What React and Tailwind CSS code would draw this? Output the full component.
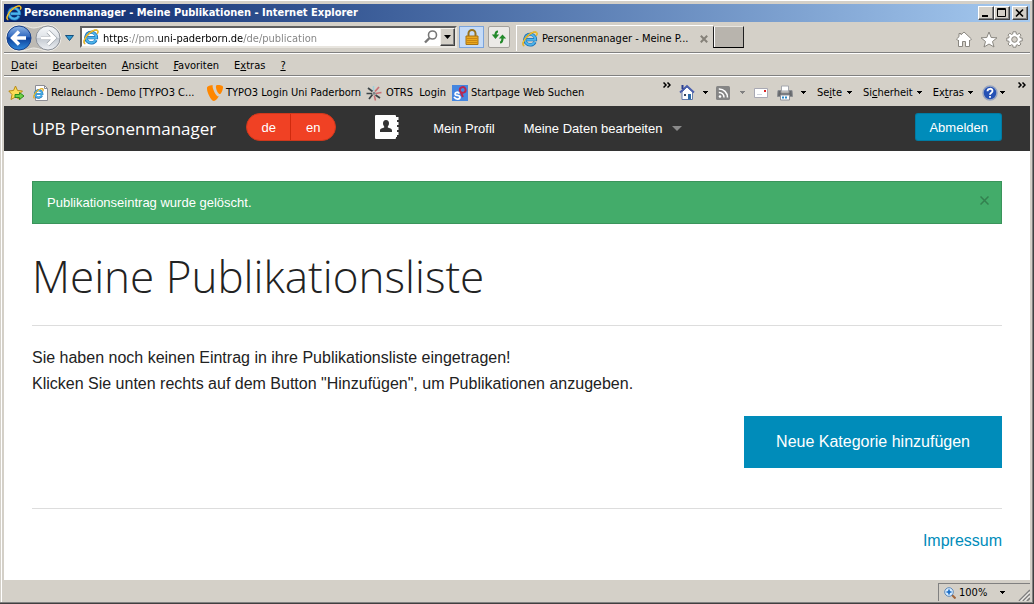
import React from "react";

function IeLogo({ className }) {
  return (
    <svg viewBox="0 0 18 18" className={className} aria-hidden="true">
      <path d="M14.6 12.3A6 6 0 1 1 15.2 9.8H5.4" fill="none" stroke="#1a6fb5" strokeWidth="3.6" />
      <path d="M14.4 12.2A5.8 5.8 0 1 1 15 9.8H5.4" fill="none" stroke="#4db4ea" strokeWidth="2.2" />
      <path d="M2.5 16.6C-.6 15.6 2 9.4 6.6 5.2C10.8 1.4 15.8-.2 16.6 2.2C16.9 3.2 16.5 4.4 16 5.2" fill="none" stroke="#c98f10" strokeWidth="1.7" />
      <path d="M2.5 16.6C-.6 15.6 2 9.4 6.6 5.2C10.8 1.4 15.8-.2 16.6 2.2C16.9 3.2 16.5 4.4 16 5.2" fill="none" stroke="#fbd541" strokeWidth="1.1" />
    </svg>
  );
}

function Caret({ className = "text-black" }) {
  return (
    <svg viewBox="0 0 5 3" className={"h-[3px] w-[5px] shrink-0 " + className} shapeRendering="crispEdges" aria-hidden="true">
      <path d="M0 0H5L2.5 3Z" fill="currentColor" />
    </svg>
  );
}

function Chevrons() {
  return (
    <svg viewBox="0 0 8 6" className="h-[6px] w-2" aria-hidden="true">
      <path d="M.5.5L3 3L.5 5.5M4.5.5L7 3L4.5 5.5" fill="none" stroke="#000" strokeWidth="1.5" />
    </svg>
  );
}

function WindowButton({ label, children }) {
  return (
    <button aria-label={label} className="flex h-[14px] w-4 items-center justify-center border border-t-white border-l-white border-r-[#404040] border-b-[#404040] bg-[#d4d0c8] shadow-[inset_-1px_-1px_0_#808080]">
      <svg viewBox="0 0 12 10" className="h-[10px] w-3" aria-hidden="true">{children}</svg>
    </button>
  );
}

function TitleBar() {
  return (
    <header className="flex h-[18px] items-center justify-between bg-linear-to-r from-[#0a246a] to-[#a6caf0] px-0.5">
      <div className="flex items-center gap-0.5">
        <IeLogo className="size-4" />
        <span className="text-[11px] font-bold whitespace-nowrap text-white">Personenmanager - Meine Publikationen - Internet Explorer</span>
      </div>
      <div className="flex">
        <WindowButton label="Minimieren"><path d="M2 7H8V9H2Z" fill="#000" /></WindowButton>
        <WindowButton label="Maximieren"><path d="M1.500.5H9.500V8.500H1.500ZM1.500 1.500H9.500" fill="none" stroke="#000" /></WindowButton>
        <span className="w-0.5" />
        <WindowButton label="Schließen"><path d="M2 1.5L9 8.5M9 1.5L2 8.5" fill="none" stroke="#000" strokeWidth="1.6" /></WindowButton>
      </div>
    </header>
  );
}

function HistoryButtons() {
  return (
    <svg viewBox="0 0 58 28" className="h-7 w-[58px]" role="img" aria-label="Zurück und Vorwärts">
      <defs>
        <linearGradient id="back" x1="0" y1="0" x2="0" y2="1">
          <stop offset="0" stopColor="#8fb4e4" />
          <stop offset=".45" stopColor="#2f68c0" />
          <stop offset=".5" stopColor="#0d3f98" />
          <stop offset="1" stopColor="#2f8be0" />
        </linearGradient>
        <linearGradient id="fwd" x1="0" y1="0" x2="0" y2="1">
          <stop offset="0" stopColor="#f5f7f9" />
          <stop offset=".48" stopColor="#dfe3e8" />
          <stop offset=".52" stopColor="#c3c9d1" />
          <stop offset="1" stopColor="#eef1f4" />
        </linearGradient>
      </defs>
      <path d="M14 1C22 1 24 4 29 4C34 4 37 1 43 1A13 13 0 0 1 43 27C37 27 34 24 29 24C24 24 22 27 14 27A13 13 0 0 1 14 1Z" fill="#bdbab4" stroke="#efede8" strokeWidth="1" />
      <circle cx="14" cy="14" r="12" fill="url(#back)" stroke="#17408b" />
      <circle cx="43" cy="14" r="12" fill="url(#fwd)" stroke="#8d929a" />
      <path d="M14 7.5L7.5 14L14 20.5M8.5 14H21" fill="none" stroke="#fff" strokeWidth="3.4" />
      <path d="M43 7.5L49.5 14L43 20.5M48.5 14H36" fill="none" stroke="#9aa0a8" strokeWidth="4.2" />
      <path d="M43 7.5L49.5 14L43 20.5M48.5 14H36" fill="none" stroke="#fff" strokeWidth="3" />
    </svg>
  );
}

function AddressRow() {
  return (
    <div className="flex h-[31px] justify-between border-b border-[#808080] pr-[7px] pl-px">
      <div className="flex items-start pt-0.5">
        <button aria-label="Verlauf"><HistoryButtons /></button>
        <button aria-label="Letzte Seiten" className="mr-1.5 ml-0.5 pt-[11px]">
          <svg viewBox="0 0 9 6" className="h-1.5 w-[9px]" aria-hidden="true"><path d="M.5.5H8.5L4.5 5.5Z" fill="#2f9bd6" stroke="#14507e" /></svg>
        </button>
        <div className="mt-0.5 flex h-[22px] w-[377px] items-center border-2 border-t-[#606060] border-r-[#e8e5df] border-b-[#e8e5df] border-l-[#606060] bg-white pl-px">
          <IeLogo className="size-4 shrink-0" />
          <input
            type="text"
            aria-label="Adresse"
            defaultValue="https://pm.uni-paderborn.de/de/publication"
            className="ml-1 h-[18px] min-w-0 flex-1 bg-[linear-gradient(90deg,#000_26px,#808080_26px_54px,#000_54px_140px,#808080_140px)] bg-clip-text pt-0.5 text-[11px] text-transparent outline-none"
          />
          <button aria-label="Suchen" className="mr-0.5">
            <svg viewBox="0 0 14 14" className="size-[14px]" aria-hidden="true"><circle cx="8.5" cy="5" r="4" fill="none" stroke="#777" strokeWidth="1.6" /><path d="M5.5 8L1 12.5" stroke="#777" strokeWidth="2.4" /></svg>
          </button>
          <button aria-label="Adressliste" className="flex h-[18px] w-[15px] items-center justify-center border border-t-[#f4f2ee] border-r-[#404040] border-b-[#404040] border-l-[#f4f2ee] bg-[#d4d0c8] shadow-[inset_-1px_-1px_0_#808080]">
            <svg viewBox="0 0 7 4" className="h-1 w-[7px]" aria-hidden="true"><path d="M0 0H7L3.5 4Z" /></svg>
          </button>
        </div>
        <button aria-label="Sicherheitsbericht" className="mt-0.5 ml-0.5 flex h-[22px] w-[25px] items-center justify-center border border-[#7ba4dc] bg-[#c5dbf7]">
          <svg viewBox="0 0 14 16" className="h-4 w-[14px]" aria-hidden="true">
            <path d="M3.5 8V4.5A3.5 3.5 0 0 1 10.5 4.5V8" fill="none" stroke="#98731d" strokeWidth="2" />
            <path d="M1 7H13V15.5H1Z" fill="#eaa91f" stroke="#a87313" />
            <path d="M1.5 9.5H12.5M1.5 11.5H12.5M1.5 13.5H12.5" stroke="#c98612" />
          </svg>
        </button>
        <button aria-label="Aktualisieren" className="mt-0.5 ml-1 flex h-[22px] w-[22px] items-center justify-center rounded-xs border border-[#a3a09b] bg-[#eceae7]">
          <svg viewBox="0 0 16 14" className="h-[14px] w-4" aria-hidden="true">
            <path d="M7 1.5Q4.5 1.5 4.5 5M9 12.5Q11.500 12.5 11.5 8" fill="none" stroke="#238a2b" strokeWidth="2.2" />
            <path d="M.8 4.600H8.2L4.5 9ZM7.800 8.6H15.2L11.500 4.4Z" fill="#238a2b" />
          </svg>
        </button>
        <div className="mt-px ml-1.5 flex h-[26px] w-[197px] items-center border-t border-l border-white pl-[5px] text-[11px]">
          <IeLogo className="size-4 shrink-0" />
          <span className="ml-1 w-[150px] whitespace-nowrap">Personenmanager - Meine P...</span>
          <button aria-label="Tab schließen" className="ml-2">
            <svg viewBox="0 0 8 8" className="size-2" aria-hidden="true"><path d="M.8.8L7.2 7.2M7.2.8L.8 7.2" stroke="#858179" strokeWidth="2" /></svg>
          </button>
        </div>
        <button aria-label="Neuer Tab" className="mt-0.5 h-[22px] w-[31px] border border-t-[#e8e5df] border-r-[#202020] border-b-black border-l-[#202020] bg-[#b8b4ad] shadow-[inset_1px_0_0_#fff]" />
      </div>
      <div className="flex items-center gap-2 pt-1">
        <button aria-label="Startseite">
          <svg viewBox="0 0 16 16" className="size-4" aria-hidden="true"><path d="M8 1L15.5 8L14 9.5L13.5 9V15.5H9.5V10.5H6.5V15.5H2.5V9L2 9.5L.5 8L3 5.700V2.5H5V3.8Z" fill="#fff" stroke="#8a8780" /></svg>
        </button>
        <button aria-label="Favoriten anzeigen">
          <svg viewBox="0 0 18 17" className="h-[17px] w-[18px]" aria-hidden="true"><path d="M9 1L11.2 6.5L17 6.8L12.5 10.5L14 16L9 13L4 16L5.5 10.5L1 6.8L6.8 6.5Z" fill="#fff" stroke="#8a8780" /></svg>
        </button>
        <button aria-label="Einstellungen">
          <svg viewBox="0 0 17 17" className="size-[17px]" aria-hidden="true">
            <path d="M7 .8H10L10.300 3L11.600 3.500L13.300 2.200L15 4.100L13.800 5.700L14.300 7H16.200V10H14.300L13.700 11.300L15 13L13 14.900L11.400 13.700L10.200 14.200L10 16.200H7L6.800 14.200L5.500 13.700L3.900 14.900L2 13L3.200 11.300L2.700 10H.8V7H2.700L3.200 5.700L2 4.100L3.900 2.200L5.500 3.500L6.700 3Z" fill="#fff" stroke="#8a8780" />
            <circle cx="8.5" cy="8.5" r="2.800" fill="#d4d0c8" stroke="#8a8780" />
          </svg>
        </button>
      </div>
    </div>
  );
}

function MenuBar() {
  return (
    <nav className="flex h-[23px] items-center gap-[15px] border-t border-t-white border-b border-b-[#808080] pt-0.5 pl-[7px] text-[11px]" aria-label="Menü">
      <button><u>D</u>atei</button>
      <button><u>B</u>earbeiten</button>
      <button><u>A</u>nsicht</button>
      <button><u>F</u>avoriten</button>
      <button>E<u>x</u>tras</button>
      <button><u>?</u></button>
    </nav>
  );
}

function FavoritesBar() {
  return (
    <div className="flex h-[30px] justify-between border-t border-white pt-0.5 pr-1 pl-1 text-[11px] whitespace-nowrap">
      <div className="flex items-center gap-2">
        <button aria-label="Zu Favoriten hinzufügen">
          <svg viewBox="0 0 17 16" className="h-4 w-[17px]" aria-hidden="true">
            <path d="M7.5 1L9.5 5.5L14.5 6L11 9.5L12 14.5L7.5 12L3 14.5L4 9.5L.8 6L5.5 5.5Z" fill="#fbdc55" stroke="#b98a16" />
            <path d="M7 9.5H11.5V7.5L16 11L11.5 14.5V12.5H7Z" fill="#6fd046" stroke="#2d8a1c" />
          </svg>
        </button>
        <a href="#relaunch" className="flex w-[166px] items-center gap-0.5">
          <span className="relative size-4 shrink-0">
            <svg viewBox="0 0 16 16" className="size-4" aria-hidden="true"><path d="M2.5.5H11.5L14.5 3.5V15.5H2.5Z" fill="#fff" stroke="#8c8c94" /><path d="M11.5.5V3.5H14.5" fill="none" stroke="#8c8c94" /></svg>
            <IeLogo className="absolute top-[3px] left-0 size-[11px]" />
          </span>
          Relaunch - Demo [TYPO3 C...
        </a>
        <a href="#typo3" className="flex w-[151px] items-center gap-[3px]">
          <svg viewBox="0 0 16 16" className="size-4 shrink-0" aria-hidden="true">
            <path d="M11.8 11.3C11.5 11.4 11.3 11.4 11 11.4C8.8 11.4 5.6 3.8 5.6 1.3C5.6.4 5.8.1 6.1 0C3.5.3.3 1.2 0 2.4C0 2.7 0 3.2 0 3.7C0 7.6 4.2 16 7 16C8.4 16 10.6 13.9 11.8 11.3ZM10.5 0C13.2 0 16 .4 16 2C16 5.2 13.9 9.1 12.9 9.1C11.1 9.1 8.9 4.2 8.9 1.7C8.9.6 9.4 0 10.5 0Z" fill="#ff8700" />
          </svg>
          TYPO3 Login Uni Paderborn
        </a>
        <a href="#otrs" className="flex w-[78px] items-center gap-1">
          <svg viewBox="0 0 16 16" className="size-4 shrink-0" aria-hidden="true">
            <path d="M7.500 6V1" stroke="#9fd0dc" strokeWidth="1.5" />
            <path d="M9 6.500L13 2M9.500 8.500L15.500 7.500" stroke="#c96f74" strokeWidth="1.7" />
            <path d="M6.500 6.500L2 3M6 8.500H.5M6.500 9.500L3 14" stroke="#3b4346" strokeWidth="1.7" />
            <path d="M9.500 10L14 13" stroke="#3b4346" strokeWidth="1.7" />
            <path d="M8.300 10.500L9.500 15.500" stroke="#c96f74" strokeWidth="1.5" />
            <circle cx="8" cy="8.300" r="1.500" fill="#7c8589" />
          </svg>
          OTRS&nbsp; Login
        </a>
        <a href="#startpage" className="flex items-center gap-[3px]">
          <svg viewBox="0 0 16 16" className="size-4 shrink-0" aria-hidden="true">
            <path d="M0 0H16V16H0Z" fill="#4586e0" />
            <path d="M7.5 8.5C5.500 6 2 8 3.500 9.800C4.500 11 7.500 9.500 8 12C8 14.600 4 14.800 2 12" fill="none" stroke="#fff" strokeWidth="1.800" />
            <path d="M11 12L8 6C6.800 2.600 11.500.5 13.300 3.500C14.800 7 11 8.800 9 7" fill="none" stroke="#b8274f" strokeWidth="1.900" />
          </svg>
          Startpage Web Suchen
        </a>
      </div>
      <div className="flex items-center">
        <button aria-label="Weitere Favoriten" className="mr-2 self-start pt-[3px]"><Chevrons /></button>
        <button aria-label="Startseite" className="flex items-center gap-2">
          <svg viewBox="0 0 16 17" className="h-[17px] w-4" aria-hidden="true">
            <path d="M3 8V15.5H13.5V8L8 3Z" fill="#fff" stroke="#667cab" />
            <path d="M1 8.5L8 2L15 8.5" fill="none" stroke="#4a5fae" strokeWidth="1.800" />
            <path d="M2.5 1H4.5V5H2.5Z" fill="#2b3f90" />
            <path d="M9 10H12V15.5H9Z" fill="#2c6ca8" /><path d="M5 10H7V12H5Z" fill="#36445c" />
          </svg>
          <Caret />
        </button>
        <button aria-label="Feeds" className="ml-2 flex items-center gap-[10px]">
          <svg viewBox="0 0 14 14" className="size-[14px]" aria-hidden="true">
            <rect width="14" height="14" rx="1.500" fill="#858585" />
            <circle cx="4" cy="10.5" r="1.300" fill="#fff" />
            <path d="M2.8 6.5A4.800 4.800 0 0 1 8 11.5M2.800 3A8.300 8.300 0 0 1 11.500 11.5" fill="none" stroke="#fff" strokeWidth="1.500" />
          </svg>
          <Caret className="text-[#808080]" />
        </button>
        <button aria-label="E-Mail" className="ml-[9px]">
          <svg viewBox="0 0 14 12" className="h-3 w-[14px]" aria-hidden="true"><path d="M.5 1.5H13.5V10.5H.5Z" fill="#fff" stroke="#a9a9b3" /><path d="M10 3H12V5H10Z" fill="#dc2626" /><path d="M3 7.5H8" stroke="#d0d4dd" /></svg>
        </button>
        <button aria-label="Drucken" className="ml-[9px] flex items-center gap-2">
          <svg viewBox="0 0 16 16" className="size-4" aria-hidden="true">
            <path d="M4.500 1H11.500V6H4.500Z" fill="#fff" stroke="#a4a7ad" />
            <path d="M1 5.500H4V8H12V5.500H15L15.5 11.5H.5Z" fill="#66686c" stroke="#8d8f93" />
            <path d="M3.5 10H12.5V15H3.500Z" fill="#fff" stroke="#8f9299" /><path d="M5 12.5H11" stroke="#2a87c8" strokeWidth="2" strokeDasharray="2 1" />
          </svg>
          <Caret />
        </button>
        <button className="ml-[11px] flex items-center gap-[5px]"><span>Se<u>i</u>te</span><Caret /></button>
        <button className="ml-[11px] flex items-center gap-1"><span>Si<u>c</u>herheit</span><Caret /></button>
        <button className="ml-[11px] flex items-center gap-1"><span>Ex<u>t</u>ras</span><Caret /></button>
        <button aria-label="Hilfe" className="ml-[9px] flex items-center gap-0.5">
          <svg viewBox="0 0 16 16" className="size-4" aria-hidden="true">
            <circle cx="8" cy="8" r="7" fill="#2450b4" stroke="#98a4bf" strokeWidth="1.5" />
            <path d="M5.5 6.2C5.5 3 10.5 3 10.5 6C10.5 7.8 8 7.8 8 9.8M8 11V12.8" fill="none" stroke="#fff" strokeWidth="1.8" />
          </svg>
          <Caret />
        </button>
        <button aria-label="Weitere Befehle" className="ml-[13px] self-start pt-[3px]"><Chevrons /></button>
      </div>
    </div>
  );
}

function SiteNav() {
  return (
    <nav className="flex h-[45px] items-start justify-between bg-[#333] px-7 text-[13px] text-white" aria-label="Hauptnavigation">
      <div className="flex items-start">
        <a href="#start" className="font-['Open_Sans',sans-serif] text-[17px] leading-[45px] whitespace-nowrap">UPB Personenmanager</a>
        <div className="mt-[7px] ml-[30px] flex h-7 overflow-hidden rounded-full border border-[#d0381c] bg-[#f04124]">
          <button className="w-11 border-r border-[#cf2a0e] pt-0.5">de</button>
          <button className="w-11 pt-0.5">en</button>
        </div>
        <a href="#adressbuch" aria-label="Adressbuch" className="mt-[9px] ml-[39px]">
          <svg viewBox="0 0 24 24" className="size-6" aria-hidden="true">
            <path d="M1 0H20Q21 0 21 1V2H23.500V5H22V7H23.500V10H22V12H23.500V15H22V17H23.500V20H22V22H21V23Q21 24 20 24H1Q0 24 0 23V1Q0 0 1 0Z" fill="#fff" />
            <path d="M11 5C13 5 14 6.3 14 8.3C14 10 13.2 11 12.8 11.6V12.5C14.5 13.2 17 13.5 17 15.5V17H5V15.5C5 13.5 7.5 13.2 9.2 12.5V11.6C8.8 11 8 10 8 8.3C8 6.3 9 5 11 5Z" fill="#333" />
          </svg>
        </a>
        <a href="#profil" className="ml-[34px] leading-[45px]">Mein Profil</a>
        <button className="ml-[29px] flex items-center gap-2.5 leading-[45px]">
          Meine Daten bearbeiten
          <svg viewBox="0 0 10 5" className="h-[5px] w-[10px]" aria-hidden="true"><path d="M0 0H10L5 5Z" fill="#8a8a8a" /></svg>
        </button>
      </div>
      <button className="mt-[7px] h-7 rounded-[3px] border border-[#007095]/60 bg-[#008cba] px-[13px] pt-0.5">Abmelden</button>
    </nav>
  );
}

function PublicationPage() {
  return (
    <main className="flex-1 bg-white font-['Liberation_Sans',Arial,sans-serif] text-[#222]">
      <SiteNav />
      <div className="px-7 pt-[30px]">
        <div role="status" className="flex h-[43px] items-center justify-between border border-[#3a945b] bg-[#43ac6a] pr-3 pl-[14px] text-[13px] text-white">
          Publikationseintrag wurde gelöscht.
          <button aria-label="Meldung schließen" className="-mt-1">
            <svg viewBox="0 0 9 9" className="size-[9px]" aria-hidden="true"><path d="M.5.5L8.5 8.5M8.5.5L.5 8.5" stroke="#33804f" strokeWidth="1.5" /></svg>
          </button>
        </div>
        <h1 className="mt-[22px] font-['Open_Sans',sans-serif] text-[44px] leading-[60px] font-light">Meine Publikationsliste</h1>
        <hr className="mt-[19px] border-[#ddd]" />
        <p className="mt-[19px] text-[16px] leading-[26px]">
          Sie haben noch keinen Eintrag in ihre Publikationsliste eingetragen!<br />
          Klicken Sie unten rechts auf dem Button "Hinzufügen", um Publikationen anzugeben.
        </p>
        <div className="mt-[19px] flex justify-end">
          <button className="h-[52px] bg-[#008cba] px-8 text-[16px] text-white">Neue Kategorie hinzufügen</button>
        </div>
        <hr className="mt-10 border-[#ddd]" />
        <footer className="mt-[19px] flex justify-end pb-5 text-[16px] leading-[26px]">
          <a href="#impressum" className="text-[#008cba]">Impressum</a>
        </footer>
      </div>
    </main>
  );
}

function StatusBar() {
  return (
    <footer className="flex h-[21px] items-end justify-end text-[11px]">
      <div className="flex h-[18px] w-[92px] items-center justify-between border-t border-l border-[#808080] pl-[5px]">
        <button className="flex items-center gap-[3px]">
          <svg viewBox="0 0 12 12" className="size-3" aria-hidden="true">
            <path d="M8 8L11.5 11.5" stroke="#a1663c" strokeWidth="2" /><circle cx="5" cy="5" r="4.3" fill="#d6ecff" stroke="#5d88b8" /><path d="M5 2.5V7.5M2.5 5H7.5" stroke="#1769c4" strokeWidth="1.6" />
          </svg>
          <span>100%</span>
          <span className="ml-2.5"><Caret /></span>
        </button>
        <svg viewBox="0 0 12 12" className="size-3 self-end" aria-hidden="true">
          <path d="M1 12L12 1M5 12L12 5M9 12L12 9" stroke="#808080" strokeWidth="1.6" /><path d="M2.5 12L12 2.5M6.5 12L12 6.5" stroke="#fff" />
        </svg>
      </div>
    </footer>
  );
}

export default function App() {
  return (
    <div className="flex min-h-screen flex-col border-r border-b border-[#404040] bg-[#d4d0c8] font-['DejaVu_Sans_Condensed',Tahoma,sans-serif] leading-[14px] text-black">
      <div className="flex flex-1 flex-col border-r border-b border-[#808080]">
        <div className="ml-px flex flex-1 flex-col border-t border-l border-white pt-[3px] pr-0.5 pb-px pl-0.5">
          <TitleBar />
          <AddressRow />
          <MenuBar />
          <FavoritesBar />
          <PublicationPage />
          <StatusBar />
        </div>
      </div>
    </div>
  );
}
